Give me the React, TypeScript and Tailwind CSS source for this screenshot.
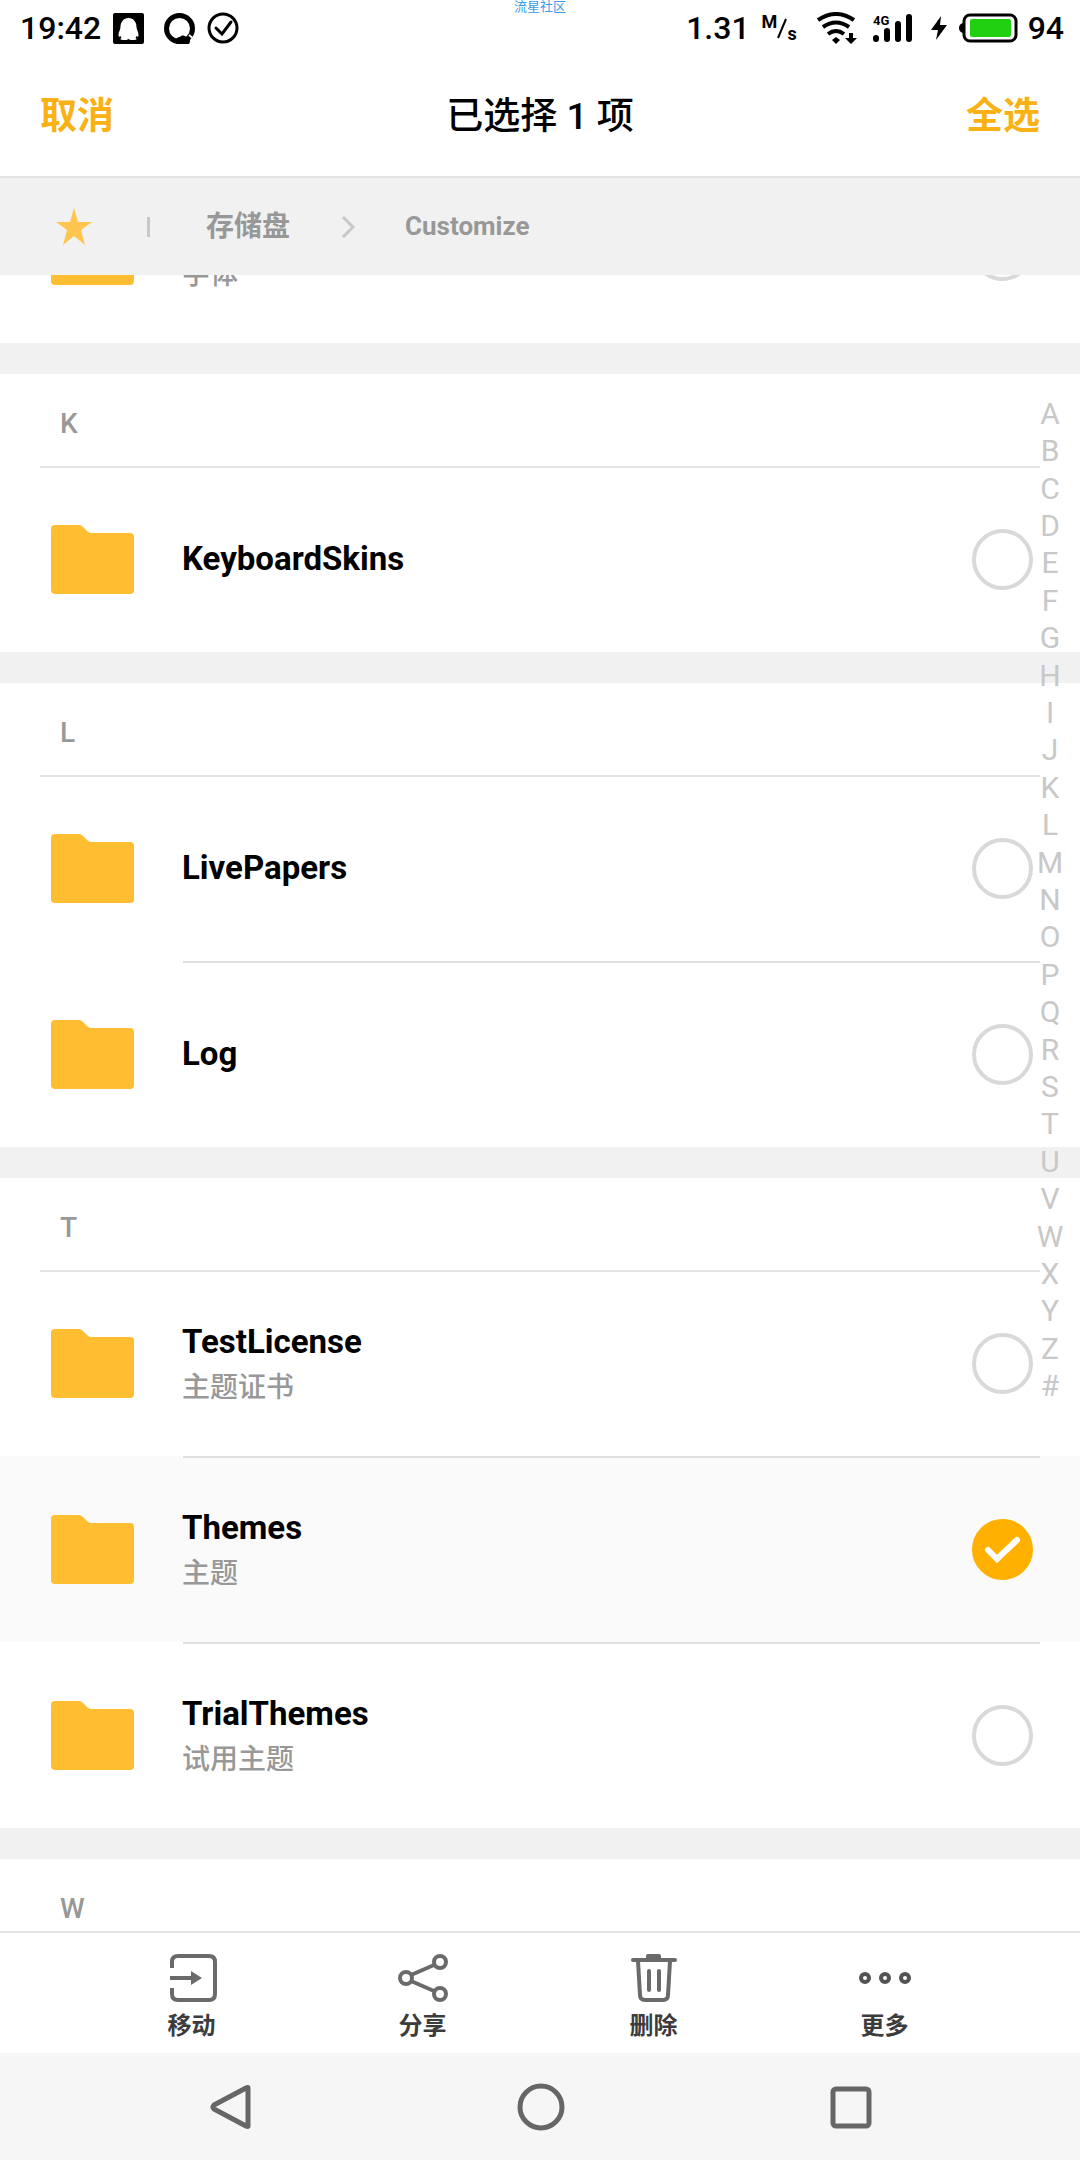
import { useState } from 'react';

interface FileItem {
  name: string;
  note?: string;
}

interface Section {
  letter: string;
  items: FileItem[];
}

const sections: Section[] = [
  { letter: 'K', items: [{ name: 'KeyboardSkins' }] },
  { letter: 'L', items: [{ name: 'LivePapers' }, { name: 'Log' }] },
  {
    letter: 'T',
    items: [
      { name: 'TestLicense', note: '主题证书' },
      { name: 'Themes', note: '主题' },
      { name: 'TrialThemes', note: '试用主题' },
    ],
  },
  { letter: 'W', items: [] },
];

const indexLetters = 'ABCDEFGHIJKLMNOPQRSTUVWXYZ#'.split('');

const FolderIcon = () => (
  <svg width="83" height="69" viewBox="0 0 83 69" className="shrink-0" aria-hidden="true">
    <path d="M4 0h24q2 0 4 2l4 4q2 2 4 2h39q4 0 4 4v53q0 4-4 4H4q-4 0-4-4V4q0-4 4-4z" fill="#ffbe32" />
  </svg>
);

const StatusBar = () => (
  <div className="flex h-14 shrink-0 items-center justify-between pl-5 pr-4 text-[32px] leading-[40px] text-black">
    <div className="flex items-center">
      <span className="mr-3 font-medium">19:42</span>
      <svg width="31" height="31" viewBox="0 0 31 31" className="mr-5">
        <rect width="31" height="31" rx="2" fill="#000" />
        <path d="M15.500 5c-5 0-8 4-8 9 0 2-2 5-2 8 0 2 1 2 2 1l1 2c-2 1-1 2 2 2 2 0 4 0 5-1 1 1 3 1 5 1 3 0 4-1 2-2l1-2c1 1 2 1 2-1 0-3-2-6-2-8 0-5-3-9-8-9z" fill="#fff" />
      </svg>
      <svg width="31" height="31" viewBox="0 0 31 31" className="mr-3">
        <circle cx="15.500" cy="15.500" r="13" fill="none" stroke="#000" strokeWidth="5" />
        <path d="M25 22l6 5" stroke="#fff" strokeWidth="2" />
        <path d="M11 29c1-4 3-5 5-5 1-2 5-2 6 0 4 0 5 4 3 7H13z" fill="#000" />
      </svg>
      <svg width="32" height="32" viewBox="0 0 32 32" fill="none" stroke="#000" strokeWidth="3">
        <circle cx="16" cy="16" r="14" />
        <path d="M9 16l6 6 9-12" strokeLinecap="round" />
      </svg>
    </div>
    <div className="flex items-center">
      <span className="mr-3 font-medium">1.31</span>
      <span className="mr-5 flex text-[18px] leading-[22px] font-bold">
        <span className="pb-3">M</span>
        <svg width="10" height="34" viewBox="0 0 10 34" stroke="#000" strokeWidth="2">
          <path d="M9 8L1 27" />
        </svg>
        <span className="pt-3">s</span>
      </span>
      <svg width="40" height="32" viewBox="0 0 40 32" className="mr-4" fill="none" stroke="#000" strokeWidth="4">
        <path d="M1 8Q19-4 37 8M6 15q13-9 26 0M11 22q8-6 16 0" />
        <path d="M19 25l4 3-4 4-4-4zM32 21h4v5h4l-6 6-6-6h4z" fill="#000" stroke="none" />
      </svg>
      <svg width="41" height="30" viewBox="0 0 41 30" className="mr-4 overflow-visible">
        <text x="0" y="12" fontSize="13" fontWeight="bold">4G</text>
        <path d="M3 25v1M14 18v8M25 11v15M36 4v22" stroke="#000" strokeWidth="6" strokeLinecap="round" />
      </svg>
      <svg width="17" height="24" viewBox="0 0 17 24" className="mr-3">
        <path d="M11 0L1 14h7L6 24l11-15h-7z" fill="#000" />
      </svg>
      <svg width="59" height="30" viewBox="0 0 59 30" className="mr-2.5">
        <rect x="5" y="2" width="52" height="26" rx="6" fill="none" stroke="#000" strokeWidth="3" />
        <path d="M4 10q-4 1-4 5t4 5z" fill="#000" />
        <rect x="11" y="6" width="41" height="18" rx="2" fill="#22d012" />
      </svg>
      <span className="font-medium">94</span>
    </div>
  </div>
);

const FileRow = ({ item, selected, divider, onToggle }: {
  item: FileItem;
  selected: boolean;
  divider: boolean;
  onToggle: () => void;
}) => (
  <li className={selected ? 'bg-[#fafafa]' : 'bg-white'}>
    {divider && <div className="ml-[183px] mr-10 h-0.5 bg-[#e0e0e0]" />}
    <label className="flex h-46 items-center pb-0.5 pl-[51px] pr-[47px]">
      <FolderIcon />
      <span className={item.note ? 'ml-12 flex flex-1 flex-col pt-1' : 'ml-12 flex flex-1 flex-col'}>
        <span className="min-h-[46px] text-[33px] leading-[46px] font-bold text-black">{item.name}</span>
        {item.note && <span className="text-[28px] leading-[46px] font-medium text-[#989898]">{item.note}</span>}
      </span>
      <span className="relative flex h-[61px] w-[61px]">
        <input
          type="checkbox"
          checked={selected}
          onChange={onToggle}
          className="h-full w-full appearance-none rounded-full border-4 border-[#d9d9d9] checked:border-[#ffb000] checked:bg-[#ffb000]"
        />
        {selected && (
          <svg viewBox="0 0 61 61" className="pointer-events-none absolute inset-0">
            <path d="M16 31l9 9 20-19" fill="none" stroke="#fff" strokeWidth="6" strokeLinecap="round" />
          </svg>
        )}
      </span>
    </label>
  </li>
);

const MoveIcon = () => (
  <svg width="52" height="50" viewBox="0 0 52 50" fill="none" stroke="#6a6a6a" strokeWidth="4">
    <path d="M6 15V9q0-6 6-6h31q6 0 6 6v32q0 6-6 6H12q-6 0-6-6v-6M4 25h24" />
    <path d="M25 18l11 7-11 7z" fill="#6a6a6a" stroke="none" />
  </svg>
);

const ShareIcon = () => (
  <svg width="52" height="50" viewBox="0 0 52 50" fill="none" stroke="#6a6a6a" strokeWidth="4">
    <circle cx="9" cy="25" r="6" />
    <circle cx="43" cy="9" r="6" />
    <circle cx="43" cy="41" r="6" />
    <path d="M14 22l23-10M14 28l23 10" />
  </svg>
);

const TrashIcon = () => (
  <svg width="52" height="50" viewBox="0 0 52 50" fill="none" stroke="#6a6a6a" strokeWidth="4" strokeLinecap="round">
    <path d="M5 7h42M10 8l2 34q0 5 5 5h18q5 0 5-5l2-34M21 18v19M31 18v19" />
    <path d="M18 6V3q0-2 2-2h11q2 0 2 2v3z" fill="#6a6a6a" stroke="none" />
  </svg>
);

const MoreIcon = () => (
  <svg width="52" height="50" viewBox="0 0 52 50" fill="none" stroke="#525252" strokeWidth="4">
    <circle cx="6" cy="25" r="4" />
    <circle cx="26" cy="25" r="4" />
    <circle cx="46" cy="25" r="4" />
  </svg>
);

const actions = [
  { label: '移动', Icon: MoveIcon },
  { label: '分享', Icon: ShareIcon },
  { label: '删除', Icon: TrashIcon },
  { label: '更多', Icon: MoreIcon },
];

const App = () => {
  const [selected, setSelected] = useState<string[]>(['Themes']);

  const toggle = (name: string) => {
    setSelected(prev => (prev.includes(name) ? prev.filter(n => n !== name) : [...prev, name]));
  };

  const selectAll = () => setSelected(sections.flatMap(s => s.items.map(i => i.name)));

  return (
    <div className="relative flex h-screen flex-col overflow-hidden bg-white font-['Roboto','Noto_Sans_CJK_SC',sans-serif]">
      <p className="absolute inset-x-0 top-0 text-center text-[13px] leading-[13px] text-[#3d9be9]">流星社区</p>
      <StatusBar />

      <header className="flex h-[122px] shrink-0 items-center justify-between border-b-2 border-[#e4e4e4] px-10 pt-0.5 text-[37px] font-bold">
        <button className="text-[#f9b115]" onClick={() => setSelected([])}>取消</button>
        <h1 className="font-medium text-black">已选择 {selected.length} 项</h1>
        <button className="text-[#f9b115]" onClick={selectAll}>全选</button>
      </header>

      <nav className="flex h-[97px] shrink-0 items-center bg-[#f1f1f1] pl-14 text-[28px] font-bold text-[#989898]">
        <button aria-label="收藏">
          <svg width="36" height="37" viewBox="0 0 36 37">
            <path d="M18 0l4 14h14L25 22l4 15-11-9-11 9 4-15L0 14h14z" fill="#ffc64f" />
          </svg>
        </button>
        <span className="ml-[55px] h-5 w-[3px] bg-[#c8c8c8]" />
        <a href="#storage" className="ml-14">存储盘</a>
        <svg width="14" height="22" viewBox="0 0 14 22" className="ml-[51px]" fill="none" stroke="#c8c8c8" strokeWidth="3">
          <path d="M2 1l10 10L2 21" />
        </svg>
        <a href="#customize" className="ml-[50px] text-[26px]">Customize</a>
      </nav>

      <main className="min-h-0 flex-1 overflow-hidden bg-[#f1f1f1]">
        {/* list is scrolled part way past the previous section */}
        <ul className="-mt-29">
          <FileRow item={{ name: '', note: '字体' }} selected={false} divider={false} onToggle={() => {}} />
        </ul>
        {sections.map(section => (
          <section key={section.letter} className="mt-[31px] bg-white">
            <h2 className="flex h-23 items-center pl-[60px] pt-2 text-[28px] font-medium text-[#989898]">{section.letter}</h2>
            <div className="ml-10 mr-10 h-0.5 bg-[#e4e4e4]" />
            <ul>
              {section.items.map((item, i) => (
                <FileRow
                  key={item.name}
                  item={item}
                  selected={selected.includes(item.name)}
                  divider={i > 0}
                  onToggle={() => toggle(item.name)}
                />
              ))}
            </ul>
          </section>
        ))}
      </main>

      <div className="absolute right-3 top-[395px] flex h-[1010px] w-9 flex-col font-['Roboto',sans-serif] text-[30px] text-[#c8c8c8]">
        {indexLetters.map(letter => (
          <a key={letter} href={`#${letter}`} className="flex flex-1 items-center justify-center leading-none">{letter}</a>
        ))}
      </div>

      <footer className="shrink-0">
        <div className="grid h-[122px] grid-cols-4 border-t-2 border-[#e4e4e4] bg-white pl-19 pr-20">
          {actions.map(({ label, Icon }) => (
            <button key={label} className="flex flex-col items-center pt-5 text-[24px] leading-[46px] font-bold text-[#3c3c3c]">
              <Icon />
              {label}
            </button>
          ))}
        </div>
        <div className="grid h-[107px] grid-cols-3 items-center justify-items-center bg-[#f6f6f6] pl-19 pr-[74px]">
          <button aria-label="返回">
            <svg width="48" height="48" viewBox="0 0 48 48" fill="none" stroke="#666" strokeWidth="5" strokeLinejoin="round">
              <path d="M41 5v38q0 1-2 0L7 26q-2-2 0-4L39 5q2-1 2 0z" />
            </svg>
          </button>
          <button aria-label="主页">
            <svg width="48" height="48" viewBox="0 0 48 48" fill="none" stroke="#666" strokeWidth="5">
              <circle cx="24" cy="24" r="21" />
            </svg>
          </button>
          <button aria-label="最近任务">
            <svg width="48" height="48" viewBox="0 0 48 48" fill="none" stroke="#666" strokeWidth="5">
              <rect x="6" y="6" width="36" height="37" rx="3" />
            </svg>
          </button>
        </div>
      </footer>
    </div>
  );
};

export default App;
